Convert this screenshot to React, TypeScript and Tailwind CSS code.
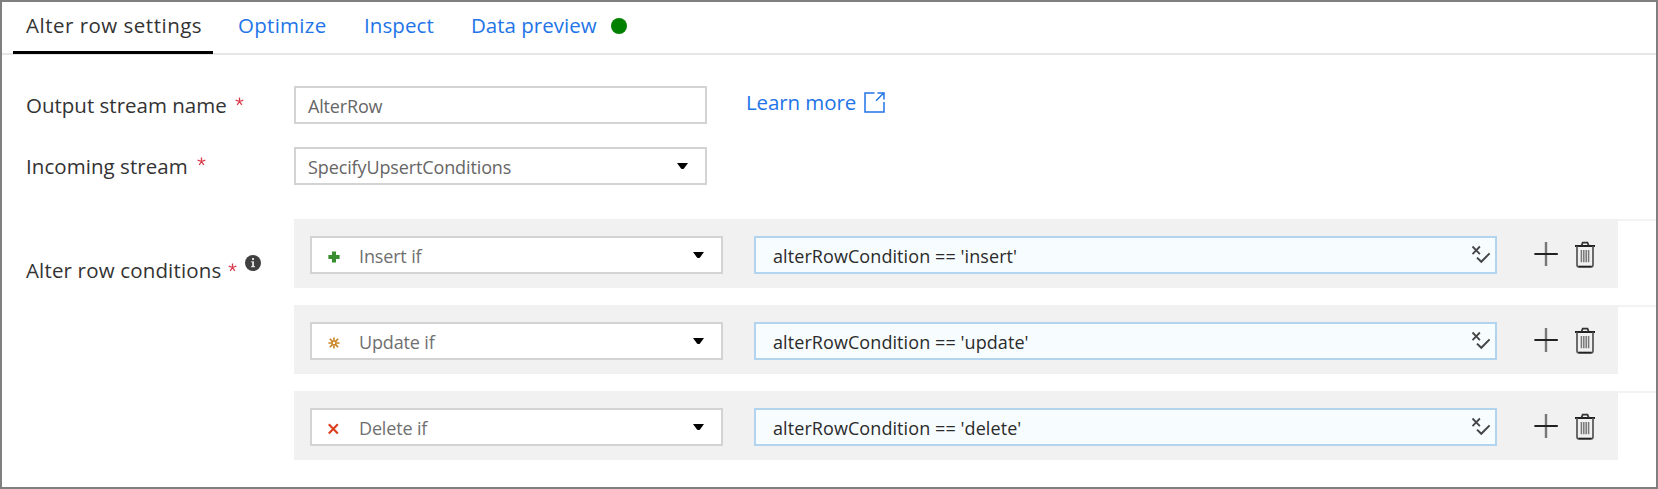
import React from "react";

function Caret() {
  return (
    <svg className="ml-auto mr-[16px]" width="13" height="8" viewBox="0 0 13 8">
      <path d="M1 1h11L8 6.4Q6.5 7.6 5 6.4Z" fill="#000" />
    </svg>
  );
}

function Star({ className = "" }: { className?: string }) {
  return (
    <svg className={className} width="9" height="9" viewBox="0 0 9 9" stroke="#d93a4a" strokeWidth="1.3" fill="none">
      <path d="M4.5 .5v4M.7 3.2l3.8 1.3M8.3 3.2L4.5 4.5M2.2 7.9l2.3-3.4M6.8 7.9L4.5 4.5" />
    </svg>
  );
}

function PlusMark() {
  return (
    <svg width="12" height="12" viewBox="0 0 12 12">
      <path d="M4 .5h4V4h3.6v4H8v3.5H4V8H.4V4H4Z" fill="#388e2f" />
    </svg>
  );
}

function SunMark() {
  return (
    <svg width="12" height="12" viewBox="0 0 12 12" fill="none" stroke="#cb8424" strokeWidth="1.6">
      <circle cx="6" cy="6" r="2" />
      <path d="M6 .4v3M6 8.6v3M.4 6h3M8.6 6h3M1.8 1.8l2.6 2.6M7.6 7.6l2.6 2.6M10.2 1.8L7.6 4.4M4.4 7.6l-2.6 2.6" />
    </svg>
  );
}

function CrossMark() {
  return (
    <svg width="12" height="12" viewBox="0 0 12 12" fill="none" stroke="#dc3f1b" strokeWidth="2.1">
      <path d="M.8 1.2l9 9.4M9.8 1.2l-9 9.4" />
    </svg>
  );
}

function ExpressionIcon() {
  return (
    <svg className="ml-auto mr-[4px]" width="20" height="20" viewBox="0 0 20 20" fill="none" stroke="#454545">
      <path d="M1.5 1.5l7.4 7.6M8.9 1.5L1.5 9.1" strokeWidth="1.8" />
      <path d="M6 12.6l4.3 4.2L18.6 8.4" strokeWidth="2" />
    </svg>
  );
}

function AddIcon() {
  return (
    <svg width="24" height="24" viewBox="0 0 24 24" fill="none">
      <path d="M12 0v24" stroke="#777" strokeWidth="2.4" />
      <path d="M.4 12h23.4" stroke="#222" strokeWidth="2" />
    </svg>
  );
}

function TrashIcon() {
  return (
    <svg width="20" height="27" viewBox="0 0 20 27" fill="none">
      <path d="M0 5h20" stroke="#222" strokeWidth="2" />
      <path d="M6.5 4.6L7.7 1.6h4.8l1.2 3" stroke="#333" strokeWidth="1.7" />
      <path d="M2 5v19q0 1.7 1.7 1.7h12.6q1.7 0 1.7-1.7V5" stroke="#555" strokeWidth="1.7" />
      <path d="M3.5 25.7h13" stroke="#222" strokeWidth="1.7" />
      <path d="M6.4 9v12.3M8.8 9v12.3M11.2 9v12.3M13.6 9v12.3" stroke="#777" strokeWidth="1.5" />
    </svg>
  );
}

const conditions = [
  { label: "Insert if", icon: <PlusMark />, expr: "alterRowCondition == 'insert'" },
  { label: "Update if", icon: <SunMark />, expr: "alterRowCondition == 'update'" },
  { label: "Delete if", icon: <CrossMark />, expr: "alterRowCondition == 'delete'" },
];

export default function App() {
  return (
    <div className="flex h-[489px] w-[1658px] flex-col overflow-hidden whitespace-nowrap border-2 border-[#7f7f7f] bg-white font-['Open_Sans',sans-serif] text-[20.5px] text-[#333]">
      <nav className="flex h-[53px] shrink-0 border-b-2 border-[#e6e6e6] pl-[11px] leading-[46px] text-[#2274e8]">
        <div className="-mb-px h-[52px] w-[200px] shrink-0 border-b-[3px] border-black pl-[13px] text-[#333]">
          <span className="tracking-[0.5px]">Alter row settings</span>
        </div>
        <div className="w-[126px] shrink-0 pl-[25px] tracking-[0.28px]">Optimize</div>
        <div className="w-[107px] shrink-0 pl-[25px] tracking-[0.1px]">Inspect</div>
        <div className="w-[165px] shrink-0 pl-[25px]">Data preview</div>
        <div className="mt-[16px] size-[16px] rounded-full bg-[#008000]" />
      </nav>

      <div className="mt-[31px] flex h-[38px] shrink-0 pl-[24px]">
        <label className="flex w-[268px] leading-[38px]">
          Output stream name
          <Star className="ml-[8px] mt-[11px]" />
        </label>
        <div className="flex w-[413px] items-center border-2 border-[#d3d3d3] pl-[12px] text-[18px] text-[#666]">
          <span className="pt-[2px] tracking-[-0.16px]">AlterRow</span>
        </div>
        <a className="flex h-[32px] items-center pl-[39px] text-[#2274e8]">
          <span className="tracking-[-0.1px]">Learn more</span>
          <svg className="ml-[8px]" width="21" height="21" viewBox="0 0 21 21" fill="none" stroke="#2274e8" strokeWidth="1.5">
            <path d="M10.5 1H1v19h19V10M12 8.8L19.3 1.5M13.5 1H20v6.5" />
          </svg>
        </a>
      </div>

      <div className="mt-[23px] flex h-[38px] shrink-0 pl-[24px]">
        <label className="flex w-[268px] leading-[38px]">
          <span className="tracking-[0.05px]">Incoming stream</span>
          <Star className="ml-[9px] mt-[10px]" />
        </label>
        <div className="flex w-[413px] items-center border-2 border-[#d3d3d3] pl-[12px] text-[18px] text-[#666]">
          <span className="pt-[2px] tracking-[-0.12px]">SpecifyUpsertConditions</span>
          <Caret />
        </div>
      </div>

      <div className="mt-[34px] flex pl-[24px]">
        <div className="flex w-[268px] shrink-0 pt-[33px] leading-[36px]">
          <span className="tracking-[0.16px]">Alter row conditions</span>
          <Star className="ml-[7px] mt-[11px]" />
          <svg className="ml-[8px] mt-[3px]" width="16" height="16" viewBox="0 0 16 16">
            <circle cx="8" cy="8" r="8" fill="#404040" />
            <path d="M7 3h2v2H7ZM6.3 6.3H9V11h1v1.2H6.1V11h1V7.4h-.8Z" fill="#ddd" />
          </svg>
        </div>
        <div className="flex flex-1 flex-col gap-[17px]">
          {conditions.map((c) => (
            <div key={c.label} className="flex h-[69px]">
              <div className="flex w-[1324px] shrink-0 items-start bg-[#f1f1f1] pl-[16px] pt-[17px]">
                <div className="flex h-[38px] w-[413px] items-center border-2 border-[#d3d3d3] bg-white pl-[16px] text-[18px] text-[#707070]">
                  <span className="mr-[19px] mt-[3px]">{c.icon}</span>
                  <span className="pt-[2px] tracking-[-0.15px]">{c.label}</span>
                  <Caret />
                </div>
                <div className="ml-[31px] flex h-[38px] w-[743px] items-center border-2 border-[#b3d4ee] bg-[#f7fcff] pl-[17px] text-[18px] text-[#2b2b2b]">
                  <span className="pt-[2px] tracking-[0.08px]">{c.expr}</span>
                  <ExpressionIcon />
                </div>
                <div className="ml-[37px] mt-[6px]"><AddIcon /></div>
                <div className="ml-[17px] mt-[5px]"><TrashIcon /></div>
              </div>
              <div className="h-[2px] flex-1 bg-[#f3f3f3]" />
            </div>
          ))}
        </div>
      </div>
    </div>
  );
}
